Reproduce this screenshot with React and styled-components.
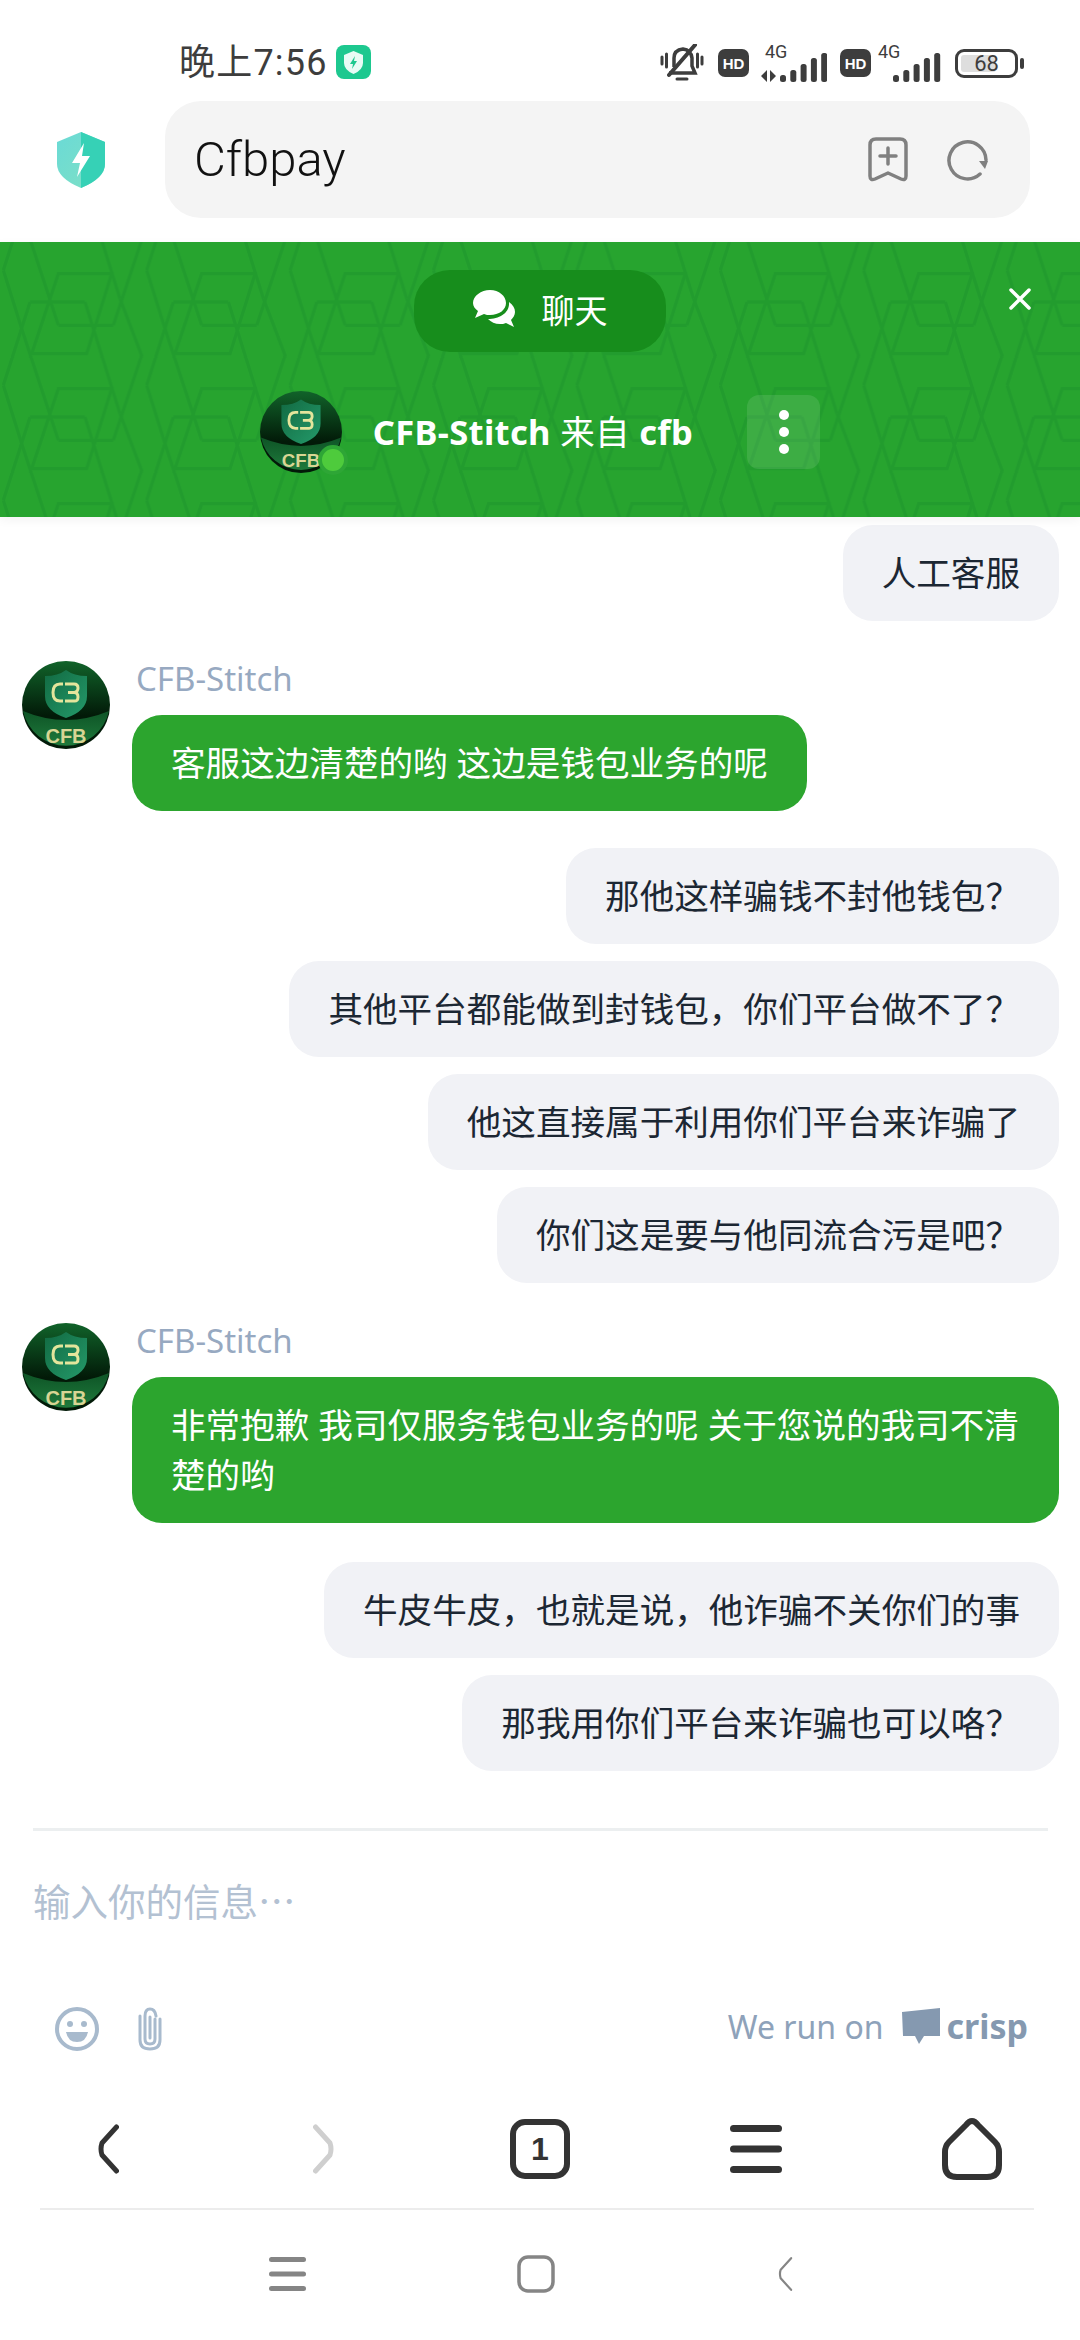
import React, { useId } from 'react';
import styled, { createGlobalStyle } from 'styled-components';

const SANS = `'Noto Sans', 'Noto Sans CJK SC', sans-serif`;
const ROBOTO = `Roboto, 'Noto Sans CJK SC', sans-serif`;

const GlobalStyle = createGlobalStyle`
  html, body {
    margin: 0;
    padding: 0;
    background: #fff;
  }
  * { box-sizing: border-box; }
`;

const Page = styled.div`
  width: 1080px;
  height: 2340px;
  display: flex;
  flex-direction: column;
  overflow: hidden;
  background: #fff;
  font-family: ${SANS};
`;

/* phone status bar */
const StatusBar = styled.div`
  height: 101px;
  padding: 43px 62px 0 179px;
  display: flex;
  align-items: flex-start;
`;

const Clock = styled.span`
  padding-top: 1px;
  font-family: ${ROBOTO};
  font-size: 36px;
  line-height: 38px;
  letter-spacing: 1.2px;
  color: #3d3d3d;
`;

const AppBadge = styled.svg`
  width: 35px;
  height: 34px;
  margin: 2px 0 0 8px;
`;

const StatusIcons = styled.div`
  margin-left: auto;
  display: flex;
  align-items: center;
  height: 40px;
`;

const HdBadge = styled.span`
  width: 31px;
  height: 28px;
  margin: 0 ${(p) => p.$right}px 0 ${(p) => p.$left}px;
  border-radius: 7px;
  background: #3d3d3d;
  color: #fff;
  font: 800 15px 'Liberation Sans', sans-serif;
  display: flex;
  align-items: center;
  justify-content: center;
`;

const SignalWrap = styled.div`
  position: relative;
  width: ${(p) => p.$width}px;
  height: 40px;
`;

const SignalLabel = styled.span`
  position: absolute;
  left: ${(p) => p.$left}px;
  top: 0;
  font: 400 18px/18px ${ROBOTO};
  color: #3d3d3d;
`;

const SignalBars = styled.svg`
  position: absolute;
  right: 0;
  bottom: 0;
`;

const Battery = styled.div`
  position: relative;
  width: 63px;
  height: 29px;
  margin-left: 14px;
  padding: 3px;
  border: 3px solid #3d3d3d;
  border-radius: 9px;
  &::after {
    content: '';
    position: absolute;
    right: -9px;
    top: 6px;
    width: 4px;
    height: 11px;
    border-radius: 2px;
    background: #3d3d3d;
  }
`;

const BatteryFill = styled.div`
  height: 100%;
  width: 68%;
  border-radius: 3px;
  background: #dedede;
`;

const BatteryText = styled.span`
  position: absolute;
  inset: 0;
  text-align: center;
  font: 400 22px/23px ${ROBOTO};
  color: #3d3d3d;
`;

/* browser toolbar */
const BrowserBar = styled.div`
  height: 141px;
  padding: 0 50px 24px 57px;
  display: flex;
  align-items: center;
  gap: 60px;
`;

const AddressBar = styled.div`
  flex: 1;
  height: 117px;
  padding: 0 41px 0 29px;
  display: flex;
  align-items: center;
  gap: 39px;
  border-radius: 36px;
  background: #f4f4f4;
`;

const AddressText = styled.span`
  flex: 1;
  font-family: ${ROBOTO};
  font-size: 49px;
  font-weight: 300;
  color: #111;
`;

/* crisp chat header */
const ChatHeader = styled.header`
  position: relative;
  height: 275px;
  padding-top: 28px;
  display: flex;
  flex-direction: column;
  align-items: center;
  background: #27a42f;
  overflow: hidden;
  box-shadow: 0 3px 10px rgba(0, 0, 0, 0.05);
`;

const PatternLayer = styled.svg`
  position: absolute;
  inset: 0;
  width: 100%;
  height: 100%;
`;

const ChatTab = styled.div`
  position: relative;
  width: 252px;
  height: 82px;
  padding-bottom: 5px;
  display: flex;
  align-items: center;
  justify-content: center;
  gap: 27px;
  border-radius: 36px;
  background: #178d1c;
  color: #fff;
  font-size: 33px;
`;

const CloseButton = styled.svg`
  position: absolute;
  top: 46px;
  right: 49px;
  width: 22px;
  height: 22px;
`;

const Profile = styled.div`
  position: relative;
  margin-top: 39px;
  display: flex;
  align-items: center;
`;

const AvatarWrap = styled.div`
  position: relative;
  width: ${(p) => p.$size}px;
  height: ${(p) => p.$size}px;
  flex: none;
`;

const OnlineDot = styled.span`
  position: absolute;
  right: -6px;
  bottom: -2px;
  width: 30px;
  height: 30px;
  border-radius: 50%;
  border: 4px solid #2ea636;
  background: #4ecb3c;
`;

const ProfileName = styled.span`
  margin: 0 0 5px 31px;
  color: #fff;
  font-size: 34.5px;
  font-weight: 700;
  letter-spacing: 0.35px;
  white-space: pre;
`;

const ProfileFrom = styled.span`
  font-weight: 400;
`;

const MoreButton = styled.div`
  position: relative;
  width: 73px;
  height: 74px;
  margin-left: 54px;
  display: flex;
  flex-direction: column;
  align-items: center;
  justify-content: center;
  gap: 7px;
  border-radius: 12px;
  background: rgba(255, 255, 255, 0.1);
`;

const MoreDot = styled.span`
  width: 10px;
  height: 10px;
  border-radius: 50%;
  background: #fff;
`;

/* conversation */
const Conversation = styled.main`
  padding: 8px 21px 0 22px;
  display: flex;
  flex-direction: column;
`;

const OwnGroup = styled.div`
  margin-top: ${(p) => p.$top}px;
  display: flex;
  flex-direction: column;
  align-items: flex-end;
  gap: 17px;
`;

const Bubble = styled.div`
  padding: 23px 39px;
  max-width: 927px;
  border-radius: 30px;
  font-size: 34.6px;
  line-height: 50px;
  background: ${(p) => (p.$agent ? '#2ca52e' : '#f1f2f6')};
  color: ${(p) => (p.$agent ? '#fff' : '#1c2733')};
`;

const AgentRow = styled.div`
  margin-top: ${(p) => p.$top}px;
  display: flex;
  gap: 22px;
`;

const AgentBody = styled.div`
  display: flex;
  flex-direction: column;
  align-items: flex-start;
`;

const AgentName = styled.span`
  padding: 1px 0 0 4px;
  height: 54px;
  font-size: 33px;
  line-height: 34px;
  color: #97a9c1;
`;

/* composer */
const Composer = styled.section`
  margin: 57px 32px 0 33px;
  border-top: 3px solid #eceff0;
`;

const Placeholder = styled.div`
  margin-top: 46px;
  font-size: 37.5px;
  line-height: 50px;
  color: #b3c1d2;
`;

const ComposerTools = styled.div`
  margin-top: 80px;
  height: 44px;
  padding: 0 20px 0 22px;
  display: flex;
  align-items: center;
  gap: 39px;
`;

const Branding = styled.div`
  margin: 0 0 6px auto;
  display: flex;
  align-items: center;
  color: #8ea2ba;
`;

const BrandLead = styled.span`
  font-size: 32px;
  margin-right: 18px;
`;

const BrandName = styled.span`
  margin-left: 7px;
  font-size: 34px;
  font-weight: 700;
  color: #8599b0;
`;

/* browser nav + system nav */
const BrowserNav = styled.nav`
  margin-top: 67px;
  height: 62px;
  display: grid;
  grid-template-columns: repeat(5, 216px);
  justify-items: center;
  align-items: center;
`;

const NavDivider = styled.div`
  margin: 28px 46px 0 40px;
  height: 2px;
  background: #ececec;
`;

const SystemNav = styled.nav`
  margin-top: 45px;
  padding-right: 8px;
  display: grid;
  grid-template-columns: repeat(3, 249px);
  justify-content: center;
  justify-items: center;
  align-items: center;
`;

const TabCount = styled.div`
  width: 60px;
  height: 60px;
  border: 6px solid #333;
  border-radius: 15px;
  display: flex;
  align-items: center;
  justify-content: center;
  font: 700 32px 'Liberation Sans', sans-serif;
  color: #333;
`;

const Segment = ({ d }) => (
  <>
    {[-345, 0, 345].map((y) => (
      <path key={y} d={d} transform={`translate(0 ${y})`} />
    ))}
  </>
);

// the hexagon wallpaper of the crisp header, coordinates are 3x
const HeaderPattern = () => {
  const id = useId();
  return (
    <PatternLayer aria-hidden="true">
      <defs>
        <pattern id={id} width="143.4" height="115" patternUnits="userSpaceOnUse">
          <g transform="scale(0.3333)" fill="none" stroke="#229c2e" strokeWidth="10">
            <Segment d="M90 180L10 430" />
            <Segment d="M10 85L65 260L175 595" />
            <Segment d="M255 180L360 515" />
            <Segment d="M360 170L425 340L340 595" />
            <Segment d="M90 180H255" />
            <Segment d="M175 250H340" />
            <Segment d="M175 95H335L260 335H95Z" />
          </g>
        </pattern>
      </defs>
      <rect width="100%" height="100%" fill={`url(#${id})`} />
    </PatternLayer>
  );
};

const CfbAvatar = ({ size, online }) => {
  const id = useId();
  return (
    <AvatarWrap $size={size}>
      <svg width={size} height={size} viewBox="0 0 88 88">
        <defs>
          <linearGradient id={`${id}a`} x1="0" y1="0" x2="0" y2="1">
            <stop offset="0" stopColor="#11632a" />
            <stop offset="0.62" stopColor="#021a08" />
          </linearGradient>
          <linearGradient id={`${id}b`} x1="0" y1="0" x2="0" y2="1">
            <stop offset="0" stopColor="#0e5426" />
            <stop offset="1" stopColor="#1f7a3c" />
          </linearGradient>
          <linearGradient id={`${id}c`} x1="0" y1="0" x2="1" y2="1">
            <stop offset="0" stopColor="#126a42" />
            <stop offset="1" stopColor="#249a6a" />
          </linearGradient>
        </defs>
        <circle cx="44" cy="44" r="44" fill={`url(#${id}a)`} />
        <path d="M1 50Q44 68 87 50A44 44 0 0 1 1 50Z" fill={`url(#${id}b)`} />
        <path
          d="M23 15Q36 15 44 9Q52 15 65 15V35Q65 50 44 57Q23 50 23 35Z"
          fill={`url(#${id}c)`}
        />
        <path
          d="M41 23H38Q31 23 31 31.500T38 40H41M43 23H52Q56 23 56 27T52 31.500H46M52 31.500Q56 31.500 56 36T52 40H43"
          fill="none"
          stroke="#e4e59c"
          strokeWidth="3"
        />
        <text
          x="44"
          y="81.500"
          textAnchor="middle"
          fontFamily="'Liberation Sans', sans-serif"
          fontSize="20"
          fontWeight="700"
          fill="#d8d594"
        >
          CFB
        </text>
      </svg>
      {online && <OnlineDot />}
    </AvatarWrap>
  );
};

const ShieldLogo = () => {
  const id = useId();
  return (
    <svg width="48" height="56" viewBox="0 0 48 56">
      <defs>
        <linearGradient id={id} x1="0" y1="0" x2="1" y2="1">
          <stop offset="0" stopColor="#6adad6" />
          <stop offset="1" stopColor="#7fe0c4" />
        </linearGradient>
      </defs>
      <path d="M24 0L48 10V32Q48 46 24 56Q0 46 0 32V10Z" fill={`url(#${id})`} />
      <path d="M24 0L48 10V32Q48 46 24 56Z" fill="#36d1b6" />
      <path d="M27 11L15 31H23L20 45L33 24H25Z" fill="#fff" />
    </svg>
  );
};

const BellOff = () => (
  <svg width="44" height="38" viewBox="0 0 44 38" fill="none" stroke="#3d3d3d">
    <path d="M2 13V20M6.500 10V23M37.500 10V23M42 13V20" strokeWidth="3" strokeLinecap="round" />
    <path d="M14 23V14Q14 6 23 5Q31 6 32 14V22L35 29H9" strokeWidth="3.500" />
    <path d="M35 1L9 31" strokeWidth="4" strokeLinecap="round" />
    <path d="M17 35H27" strokeWidth="3" strokeLinecap="round" />
  </svg>
);

const BAR_HEIGHTS = [7, 12, 18, 24, 29];

const Signal = ({ arrows }) => (
  <SignalWrap $width={arrows ? 66 : 63}>
    <SignalLabel $left={arrows ? 4 : 0}>4G</SignalLabel>
    <SignalBars width={arrows ? 66 : 48} height="30" viewBox={arrows ? '-19 0 66 30' : '0 0 48 30'} fill="#3d3d3d">
      {BAR_HEIGHTS.map((h, i) => (
        <rect key={h} x={i * 10.3} y={29 - h} width="6" height={h} rx="2.500" />
      ))}
      {arrows && <path d="M-13 17V29L-19 23ZM-10 17V29L-4 23Z" />}
    </SignalBars>
  </SignalWrap>
);

const BookmarkPlus = () => (
  <svg width="40" height="45" viewBox="0 0 40 45" fill="none" stroke="#808080" strokeWidth="3.500" strokeLinecap="round" strokeLinejoin="round">
    <path d="M8 2H32Q38 2 38 8V39Q38 44 33 42L20 36L7 42Q2 44 2 39V8Q2 2 8 2Z" />
    <path d="M20 11V27M12 19H28" />
  </svg>
);

const Reload = () => (
  <svg width="42" height="42" viewBox="0 0 42 42" fill="none">
    <path d="M39 21A18.500 18.500 0 1 0 33 35" stroke="#808080" strokeWidth="3.500" strokeLinecap="round" />
    <path d="M32 22H41L38 30Z" fill="#808080" />
  </svg>
);

const ChatGlyph = () => (
  <svg width="42" height="38" viewBox="0 0 42 38" fill="#fff">
    <path d="M17 0C26 0 33 6 33 13C33 20 26 25 17 25C15 25 13 25 11 24L2 28L5 21C2 19 0 16 0 13C0 6 8 0 17 0Z" />
    <path d="M36 12C40 15 42 18 42 22C42 25 40 28 38 30L41 37L33 33C31 34 29 34 27 34C22 34 18 32 15 29C26 29 37 23 36 12Z" />
  </svg>
);

const Emoji = () => (
  <svg width="44" height="44" viewBox="0 0 44 44" fill="none">
    <circle cx="22" cy="22" r="20" stroke="#a8bacd" strokeWidth="4" />
    <circle cx="15" cy="17" r="3" fill="#a8bacd" />
    <circle cx="29" cy="17" r="3" fill="#a8bacd" />
    <path d="M11 25H33Q31 35 22 35Q13 35 11 25Z" fill="#a8bacd" />
  </svg>
);

const Clip = () => (
  <svg width="24" height="44" viewBox="0 0 24 44" fill="none" stroke="#a8bacd" strokeWidth="3" strokeLinecap="round">
    <path d="M17 12V32Q17 37 12 37Q7 37 7 32V9Q7 2 12 2Q17 2 18 9" />
    <path d="M22 12V33Q22 42 12 42Q2 42 2 33V9" />
    <path d="M12 10V31" />
  </svg>
);

const CrispMark = () => (
  <svg width="38" height="36" viewBox="0 0 38 36">
    <path d="M38 0V28H22L17 36L13 28H1L0 4Z" fill="#8599b0" />
  </svg>
);

const Chevron = ({ dir, color, width, height, stroke }) => (
  <svg width={width} height={height} viewBox="0 0 22 50" fill="none">
    <path
      d={dir === 'left' ? 'M19.500 3L5 19Q3 25 5 31L19.500 47' : 'M2.500 3L17 19Q19 25 17 31L2.500 47'}
      stroke={color}
      strokeWidth={stroke}
      strokeLinecap="round"
      strokeLinejoin="round"
    />
  </svg>
);

const MenuLines = ({ width, height, bar, color }) => (
  <svg width={width} height={height} viewBox={`0 0 ${width} ${height}`}>
    {[0, (height - bar) / 2, height - bar].map((y) => (
      <rect key={y} y={y} width={width} height={bar} rx={bar / 2} fill={color} />
    ))}
  </svg>
);

const HomeIcon = () => (
  <svg width="60" height="62" viewBox="0 0 60 62" fill="none">
    <path
      d="M30 3Q33 3 36 7L53 24Q57 28 57 34V47Q57 59 45 59H15Q3 59 3 47V34Q3 28 7 24L24 7Q27 3 30 3Z"
      stroke="#333"
      strokeWidth="6"
      strokeLinejoin="round"
    />
  </svg>
);

const SquareIcon = () => (
  <svg width="38" height="38" viewBox="0 0 38 38" fill="none">
    <rect x="2" y="2" width="34" height="34" rx="9" stroke="#858585" strokeWidth="3.500" />
  </svg>
);

const CloseGlyph = () => (
  <CloseButton viewBox="0 0 22 22" fill="none" stroke="#fff" strokeWidth="3.500" strokeLinecap="round">
    <path d="M2 2L20 20M20 2L2 20" />
  </CloseButton>
);

export default function App() {
  return (
    <Page>
      <GlobalStyle />
      <StatusBar>
        <Clock>晚上7:56</Clock>
        <AppBadge viewBox="0 0 35 34">
          <rect width="35" height="34" rx="8" fill="#1dc88f" />
          <path d="M17.500 6L27 10V18Q27 25 17.500 29Q8 25 8 18V10Z" fill="#e8fbf5" />
          <path d="M19 11L14 19H17L16 24L21 16H18Z" fill="#1dc88f" />
        </AppBadge>
        <StatusIcons>
          <BellOff />
          <HdBadge $left={14} $right={12}>HD</HdBadge>
          <Signal arrows />
          <HdBadge $left={13} $right={7}>HD</HdBadge>
          <Signal />
          <Battery>
            <BatteryFill />
            <BatteryText>68</BatteryText>
          </Battery>
        </StatusIcons>
      </StatusBar>

      <BrowserBar>
        <ShieldLogo />
        <AddressBar>
          <AddressText>Cfbpay</AddressText>
          <BookmarkPlus />
          <Reload />
        </AddressBar>
      </BrowserBar>

      <ChatHeader>
        <HeaderPattern />
        <ChatTab>
          <ChatGlyph />
          聊天
        </ChatTab>
        <CloseGlyph />
        <Profile>
          <CfbAvatar size={82} online />
          <ProfileName>
            CFB-Stitch <ProfileFrom>来自</ProfileFrom> cfb
          </ProfileName>
          <MoreButton>
            <MoreDot />
            <MoreDot />
            <MoreDot />
          </MoreButton>
        </Profile>
      </ChatHeader>

      <Conversation>
        <OwnGroup $top={0}>
          <Bubble>人工客服</Bubble>
        </OwnGroup>
        <AgentRow $top={40}>
          <CfbAvatar size={88} />
          <AgentBody>
            <AgentName>CFB-Stitch</AgentName>
            <Bubble $agent>客服这边清楚的哟 这边是钱包业务的呢</Bubble>
          </AgentBody>
        </AgentRow>
        <OwnGroup $top={37}>
          <Bubble>那他这样骗钱不封他钱包？</Bubble>
          <Bubble>其他平台都能做到封钱包，你们平台做不了？</Bubble>
          <Bubble>他这直接属于利用你们平台来诈骗了</Bubble>
          <Bubble>你们这是要与他同流合污是吧？</Bubble>
        </OwnGroup>
        <AgentRow $top={40}>
          <CfbAvatar size={88} />
          <AgentBody>
            <AgentName>CFB-Stitch</AgentName>
            <Bubble $agent>非常抱歉 我司仅服务钱包业务的呢 关于您说的我司不清楚的哟</Bubble>
          </AgentBody>
        </AgentRow>
        <OwnGroup $top={39}>
          <Bubble>牛皮牛皮，也就是说，他诈骗不关你们的事</Bubble>
          <Bubble>那我用你们平台来诈骗也可以咯？</Bubble>
        </OwnGroup>
      </Conversation>

      <Composer>
        <Placeholder>输入你的信息⋯</Placeholder>
        <ComposerTools>
          <Emoji />
          <Clip />
          <Branding>
            <BrandLead>We run on</BrandLead>
            <CrispMark />
            <BrandName>crisp</BrandName>
          </Branding>
        </ComposerTools>
      </Composer>

      <BrowserNav>
        <Chevron dir="left" color="#333" width={22} height={50} stroke={5} />
        <Chevron dir="right" color="#cfcfcf" width={22} height={50} stroke={5} />
        <TabCount>1</TabCount>
        <MenuLines width={52} height={48} bar={7} color="#333" />
        <HomeIcon />
      </BrowserNav>
      <NavDivider />
      <SystemNav>
        <MenuLines width={37} height={34} bar={5} color="#858585" />
        <SquareIcon />
        <Chevron dir="left" color="#858585" width={20} height={36} stroke={3} />
      </SystemNav>
    </Page>
  );
}
